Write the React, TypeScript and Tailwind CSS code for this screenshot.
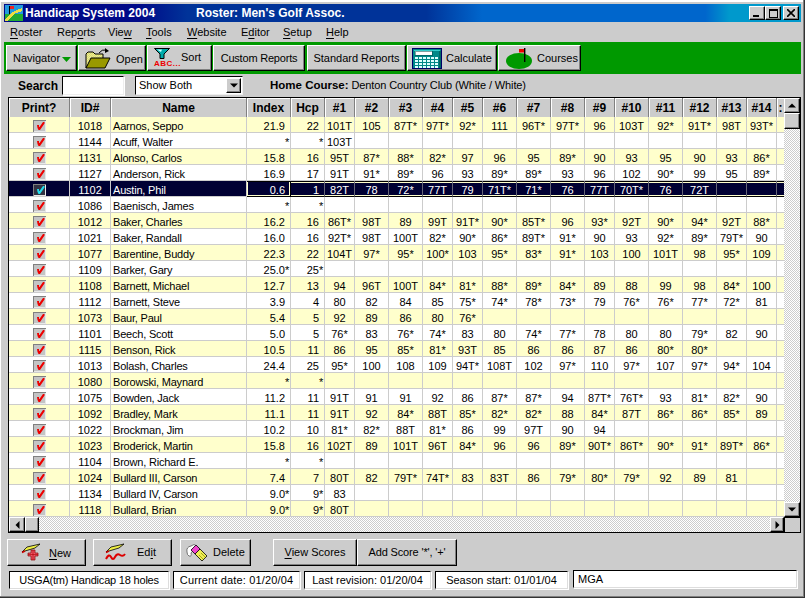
import React from "react";

const rows = [
  "1018|Aarnos, Seppo|21.9|22|101T 105 87T* 97T* 92* 111 96T* 97T* 96 103T 92* 91T* 98T 93T*",
  "1144|Acuff, Walter|*|*|103T",
  "1131|Alonso, Carlos|15.8|16|95T 87* 88* 82* 97 96 95 89* 90 93 95 90 93 86*",
  "1127|Anderson, Rick|16.9|17|91T 91* 89* 96 93 89* 89* 93 96 102 90* 99 95 89*",
  "1102|Austin, Phil|0.6|1|82T 78 72* 77T 79 71T* 71* 76 77T 70T* 76 72T",
  "1086|Baenisch, James|*|*|",
  "1012|Baker, Charles|16.2|16|86T* 98T 89 99T 91T* 90* 85T* 96 93* 92T 90* 94* 92T 88*",
  "1021|Baker, Randall|16.0|16|92T* 98T 100T 82* 90* 86* 89T* 91* 90 93 92* 89* 79T* 90",
  "1077|Barentine, Buddy|22.3|22|104T 97* 95* 100* 103 95* 83* 91* 103 100 101T 98 95* 109",
  "1109|Barker, Gary|25.0*|25*|",
  "1108|Barnett, Michael|12.7|13|94 96T 100T 84* 81* 88* 89* 84* 89 88 99 98 84* 100",
  "1112|Barnett, Steve|3.9|4|80 82 84 85 75* 74* 78* 73* 79 76* 76* 77* 72* 81",
  "1073|Baur, Paul|5.4|5|92 89 86 80 76*",
  "1101|Beech, Scott|5.0|5|76* 83 76* 74* 83 80 74* 77* 78 80 80 79* 82 90",
  "1115|Benson, Rick|10.5|11|86 95 85* 81* 93T 85 86 86 87 86 80* 80*",
  "1013|Bolash, Charles|24.4|25|95* 100 108 109 94T* 108T 102 97* 110 97* 107 97* 94* 104",
  "1080|Borowski, Maynard|*|*|",
  "1075|Bowden, Jack|11.2|11|91T 91 91 92 86 87* 87* 94 87T* 76T* 93 81* 82* 90",
  "1092|Bradley, Mark|11.1|11|91T 92 84* 88T 85* 82* 82* 88 84* 87T 86* 86* 85* 89",
  "1022|Brockman, Jim|10.2|10|81* 82* 88T 81* 86 99 97T 90 94",
  "1023|Broderick, Martin|15.8|16|102T 89 101T 96T 84* 96 96 89* 90T* 86T* 90* 91* 89T* 86*",
  "1104|Brown, Richard E.|*|*|",
  "1024|Bullard III, Carson|7.4|7|80T 82 79T* 74T* 83 83T 86 79* 80* 79* 92 89 81",
  "1134|Bullard IV, Carson|9.0*|9*|83",
  "1118|Bullard, Brian|9.0*|9*|80T",
];

const scoreWidths = [30, 34, 34, 30, 30, 34, 34, 34, 30, 34, 34, 34, 30, 30];
const scoreCols = scoreWidths.map((w, i) => ({ w, label: `#${i + 1}` }));

const raised =
  "border border-t-white border-l-white border-r-black border-b-black bg-[#cccccc] shadow-[inset_-1px_-1px_0_#808080]";
const track =
  "bg-[repeating-conic-gradient(#ffffff_0_25%,#cccccc_0_50%)] bg-[length:2px_2px]";

function Check({ selected }: { selected: boolean }) {
  return (
    <svg width="13" height="12" viewBox="0 0 13 12" shapeRendering="crispEdges" className="block">
      <rect width="13" height="12" fill={selected ? "#333344" : "#c4c4c4"} />
      <path d="M0 0H13V1H1V12H0Z" fill="#808080" />
      <path d="M12 1H13V12H1V11H12Z" fill="#e8e8e8" />
      <path
        d="M4 5H6V7L6.5 7L10 2H11.5V3.5L7 10H5.5L4.5 8Z"
        fill={selected ? "#22ddee" : "#ee0000"}
        shapeRendering="auto"
      />
    </svg>
  );
}

function Num({ value }: { value: string }) {
  const star = value.endsWith("*");
  const n = star ? value.slice(0, -1) : value;
  return (
    <span>
      {n}
      {star && <span className="-mr-[5px] inline-block w-[5px] text-left">*</span>}
    </span>
  );
}

function Row({ text, index }: { text: string; index: number }) {
  const [id, name, idx, hcp, s] = text.split("|");
  const scores = s ? s.split(" ") : [];
  const sel = id === "1102";
  const base = "h-[16px] shrink-0 border-r border-b border-[#cccccc] leading-[18px] whitespace-nowrap overflow-hidden";
  const rowBg = sel ? "bg-[#000033] text-white" : index % 2 === 0 ? "bg-[#ffffcc]" : "bg-white";
  const frame = sel
    ? "border-r-[#666677] border-b-black shadow-[inset_0_1px_0_#000000,inset_0_2px_0_#ffffcc,inset_0_-1px_0_#ffffcc]"
    : "";
  return (
    <div className={`flex h-[16px] ${rowBg}`}>
      <div className={`${base} flex w-[61px] items-start justify-center pt-[3px]`}>
        <Check selected={sel} />
      </div>
      <div className={`${base} w-[41px] text-center`}>{id}</div>
      <div className={`${base} w-[136px] pl-[2px] tracking-[-0.2px]`}>{name}</div>
      <div
        className={`${base} w-[44px] pr-[5px] text-right ${
          sel ? "border-black shadow-[inset_0_1px_0_#000000,inset_1px_1px_0_#ffffcc,inset_-1px_-1px_0_#ffffcc]" : ""
        }`}
      >
        <Num value={idx} />
      </div>
      <div className={`${base} w-[34px] pr-[5px] text-right ${frame}`}>
        <Num value={hcp} />
      </div>
      {scoreCols.map((c, i) => (
        <div key={c.label} className={`${base} text-center ${frame} ${c.w === 30 ? "w-[30px]" : "w-[34px]"}`}>
          {scores[i] ?? ""}
        </div>
      ))}
      <div className={`${base} w-[7px] border-r-0 ${frame}`} />
    </div>
  );
}

function HeaderCell({ label, className }: { label: string; className: string }) {
  return (
    <div
      className={`h-[19px] shrink-0 overflow-hidden whitespace-nowrap border-r border-[#808080] bg-[#cccccc] text-center text-[12px] font-bold leading-[20px] text-black shadow-[inset_1px_1px_0_#ffffff] ${className}`}
    >
      {label}
    </div>
  );
}

function Arrow({ dir }: { dir: "up" | "down" | "left" | "right" }) {
  const d = {
    up: "M4 0.5L0 4.5H8Z",
    down: "M0 0.5H8L4 4.5Z",
    left: "M4.5 0V8L0.5 4Z",
    right: "M0.5 0V8L4.5 4Z",
  }[dir];
  return (
    <svg width={dir === "up" || dir === "down" ? 8 : 5} height={dir === "up" || dir === "down" ? 5 : 8}>
      <path d={d} fill="#000" />
    </svg>
  );
}

function Folder() {
  return (
    <svg width="26" height="21" viewBox="0 0 26 21" className="block">
      <defs>
        <pattern id="dith" width="2" height="2" patternUnits="userSpaceOnUse">
          <rect width="2" height="2" fill="#ffff66" />
          <rect width="1" height="1" fill="#c8c8a0" />
          <rect x="1" y="1" width="1" height="1" fill="#c8c8a0" />
        </pattern>
      </defs>
      <path d="M1 6L3 4H8L10 6H18V11H7L1 20Z" fill="url(#dith)" stroke="#000" />
      <path d="M1 20L6 10H25L20 20Z" fill="#999900" stroke="#000" />
      <path d="M14 5Q17 1 21 2" fill="none" stroke="#000" />
      <path d="M20 0L24 3L20 5Z" fill="#000" />
    </svg>
  );
}

function Calculator() {
  const keys: React.ReactNode[] = [];
  for (let r = 0; r < 4; r++)
    for (let c = 0; c < 6; c++)
      keys.push(<rect key={`${r}-${c}`} x={3 + c * 4} y={9 + r * 3} width="3" height="2" fill="#ddffff" />);
  return (
    <svg width="30" height="21" viewBox="0 0 30 21" shapeRendering="crispEdges" className="block">
      <rect x="0.5" y="0.5" width="29" height="20" fill="#008888" stroke="#000066" />
      <rect x="2" y="2" width="26" height="1" fill="#33cccc" />
      <rect x="3" y="3" width="17" height="4" fill="#ffffff" stroke="#004444" strokeWidth="0.5" />
      {keys}
      <rect x="27" y="3" width="2" height="17" fill="#006666" />
    </svg>
  );
}

function Green() {
  return (
    <svg width="27" height="21" viewBox="0 0 27 21" className="block">
      <ellipse cx="13" cy="13" rx="13" ry="8" fill="#009900" />
      <rect x="18" y="0" width="1.4" height="14" fill="#000" />
      <rect x="13" y="1" width="5" height="3.5" fill="#ee0000" />
    </svg>
  );
}

function Pencil({ cross }: { cross: boolean }) {
  return (
    <svg width="28" height="20" viewBox="0 0 28 20" className="block">
      <path d="M1 9L6 4L19 1L14 5L4 8Z" fill="#eeee44" stroke="#000" strokeWidth="0.8" />
      <path d="M1 9.5L4 8" stroke="#cc0000" strokeWidth="1.4" />
      {cross ? (
        <>
          <path d="M10 7H14V10H17V13H14V17H10V13H7V10H10Z" fill="#ee5566" stroke="#880000" strokeWidth="0.7" />
          <path d="M12 7V17M7 11.5H17" stroke="#aa0000" strokeWidth="0.6" />
        </>
      ) : (
        <path d="M1 16Q4 10 6 14T10 14T15 12T20 11" fill="none" stroke="#dd0000" strokeWidth="2" />
      )}
    </svg>
  );
}

function Eraser() {
  return (
    <svg width="23" height="20" viewBox="0 0 23 20" className="block">
      <path d="M1 9Q0 4 5 3Q8 0 11 3L5 10Q6 14 3 13Q1 12 1 9Z" fill="#fff" stroke="#555" strokeWidth="0.8" />
      <path d="M14 6L21 13L16 18L9 11Z" fill="#eeee55" stroke="#000" strokeWidth="0.8" />
      <path d="M10 2L14 6L9 11L5 7Z" fill="#ee44cc" stroke="#000" strokeWidth="0.8" />
      <path d="M15 10L19 14M13 12L17 16" stroke="#888800" strokeWidth="0.7" />
    </svg>
  );
}

function U({ children }: { children: string }) {
  return <span className="underline underline-offset-[2px]">{children}</span>;
}

function ToolBtn({ className, children }: { className: string; children: React.ReactNode }) {
  return <div className={`flex h-[26px] shrink-0 items-center text-[11px] ${raised} ${className}`}>{children}</div>;
}

function BottomBtn({ className, children }: { className: string; children: React.ReactNode }) {
  return <div className={`flex h-[27px] shrink-0 items-center text-[11px] ${raised} ${className}`}>{children}</div>;
}

function Status({ className, children }: { className: string; children: React.ReactNode }) {
  return (
    <div
      className={`flex h-[18px] shrink-0 items-center justify-center whitespace-nowrap border border-t-black border-l-black border-r-[#dddddd] border-b-[#dddddd] bg-white shadow-[1px_1px_0_#ffffff] ${className}`}
    >
      {children}
    </div>
  );
}

const menus: [string, string, string, string][] = [
  ["", "R", "oster", "w-[47px]"],
  ["Rep", "o", "rts", "w-[51px]"],
  ["Vie", "w", "", "w-[38px]"],
  ["", "T", "ools", "w-[41px]"],
  ["", "W", "ebsite", "w-[54px]"],
  ["E", "d", "itor", "w-[42px]"],
  ["", "S", "etup", "w-[43px]"],
  ["", "H", "elp", "w-[30px]"],
];

export default function App() {
  return (
    <div className="h-[598px] w-[805px] overflow-hidden bg-[#cccccc] pl-[4px] pt-[4px] font-['Liberation_Sans',Arial,sans-serif] text-[11px] text-black shadow-[inset_-1px_-1px_0_#333333,inset_-2px_-2px_0_#808080,inset_1px_2px_0_#ffffff]">
      {/* Title bar */}
      <div className="flex h-[18px] w-[797px] items-center bg-[linear-gradient(90deg,#000a88_0%,#000a88_17%,#003399_23%,#003399_53%,#0066cc_60%,#0066cc_88%,#0099cc_91%,#0099cc_100%)] text-[12px] font-bold text-white">
        <svg width="18" height="16" viewBox="0 0 18 16" shapeRendering="crispEdges" className="ml-[1px] shrink-0">
          <rect width="18" height="16" fill="#2299dd" />
          <rect y="9" width="18" height="7" fill="#22aa33" />
          <path d="M0 14L6 8L12 5L17 3V6L11 8L5 13L2 16H0Z" fill="#eedd44" />
          <rect x="4" y="1" width="1" height="8" fill="#000" />
          <rect x="5" y="1" width="4" height="3" fill="#ee2222" />
        </svg>
        <span className="ml-[2px]">Handicap System 2004</span>
        <span className="ml-[41px]">Roster: Men&apos;s Golf Assoc.</span>
        <div className="ml-auto mr-[2px] flex">
          <div className={`flex h-[14px] w-[16px] items-end ${raised}`}>
            <div className="mb-[2px] ml-[3px] h-[2px] w-[6px] bg-black" />
          </div>
          <div className={`flex h-[14px] w-[16px] items-center justify-center ${raised}`}>
            <div className="h-[9px] w-[9px] border border-t-2 border-black" />
          </div>
          <div className={`ml-[2px] flex h-[14px] w-[16px] items-center justify-center ${raised}`}>
            <svg width="8" height="8" viewBox="0 0 8 8">
              <path d="M0 0L8 8M8 0L0 8" stroke="#000" strokeWidth="1.6" />
            </svg>
          </div>
        </div>
      </div>

      {/* Menu */}
      <div className="flex h-[20px] items-center pl-[6px] pt-[1px]">
        {menus.map(([a, u, b, w]) => (
          <div key={a + u + b} className={`${w} whitespace-nowrap`}>
            {a}
            <U>{u}</U>
            {b}
          </div>
        ))}
      </div>

      {/* Toolbar */}
      <div className="flex h-[32px] w-[797px] items-center gap-[1px] bg-[#009900] pl-[2px]">
        <ToolBtn className="w-[71px] pl-[6px]">
          Navigator
          <svg width="9" height="5" className="ml-[2px] mt-[2px]">
            <path d="M0 0H9L4.5 5Z" fill="#009900" />
          </svg>
        </ToolBtn>
        <ToolBtn className="w-[68px] pl-[6px]">
          <Folder />
          <span className="ml-[5px] mt-[2px]">Open</span>
        </ToolBtn>
        <ToolBtn className="w-[65px] pl-[6px]">
          <div className="flex w-[27px] flex-col items-start">
            <svg width="16" height="11" viewBox="0 0 16 11" className="block">
              <path d="M0.5 0.5H15.5L10 6V10.5H6V6Z" fill="#00aaaa" stroke="#000" />
              <path d="M3 1.5H8L7 4Z" fill="#ccffff" />
            </svg>
            <span className="text-[8px] font-bold leading-[9px] tracking-[0.5px] text-[#ee0000]">ABC...</span>
          </div>
          <span className="mb-[2px]">Sort</span>
        </ToolBtn>
        <ToolBtn className="w-[92px] justify-center tracking-[-0.2px]">Custom Reports</ToolBtn>
        <ToolBtn className="ml-[1px] w-[99px] justify-center">Standard Reports</ToolBtn>
        <ToolBtn className="w-[90px] pl-[4px]">
          <Calculator />
          <span className="ml-[4px]">Calculate</span>
        </ToolBtn>
        <ToolBtn className="w-[83px] pl-[7px]">
          <Green />
          <span className="ml-[4px]">Courses</span>
        </ToolBtn>
      </div>

      {/* Search row */}
      <div className="mt-[2px] flex h-[19px] items-center">
        <span className="ml-[14px] w-[44px] text-[12px] font-bold">Search</span>
        <div className="h-[19px] w-[62px] border border-t-black border-l-black border-r-[#eeeeee] border-b-[#eeeeee] bg-white shadow-[1px_1px_0_#ffffff]" />
        <div className="ml-[11px] flex h-[19px] w-[108px] items-center justify-between border border-t-black border-l-black border-r-[#eeeeee] border-b-[#eeeeee] bg-white pl-[3px] pr-[1px]">
          <span>Show Both</span>
          <div className={`flex h-[15px] w-[15px] items-center justify-center ${raised}`}>
            <Arrow dir="down" />
          </div>
        </div>
        <span className="ml-[27px] whitespace-nowrap tracking-[-0.12px]">
          <span className="text-[11.5px] font-bold tracking-normal">Home Course:</span> Denton Country Club (White / White)
        </span>
      </div>

      {/* Grid */}
      <div className="ml-[4px] mt-[2px] flex h-[436px] w-[793px] flex-col border border-black">
        <div className="flex h-[419px] bg-white">
          <div className="w-[775px] shrink-0">
            <div className="flex">
              <HeaderCell label="Print?" className="w-[61px]" />
              <HeaderCell label="ID#" className="w-[41px]" />
              <HeaderCell label="Name" className="w-[136px]" />
              <HeaderCell label="Index" className="w-[44px]" />
              <HeaderCell label="Hcp" className="w-[34px]" />
              {scoreCols.map((c) => (
                <HeaderCell key={c.label} label={c.label} className={c.w === 30 ? "w-[30px]" : "w-[34px]"} />
              ))}
              <HeaderCell label=":" className="w-[7px] border-r-0" />
            </div>
            {rows.map((r, i) => (
              <Row key={r} text={r} index={i} />
            ))}
          </div>
          <div className={`flex w-[16px] flex-col ${track}`}>
            <div className={`flex h-[15px] items-center justify-center ${raised}`}>
              <Arrow dir="up" />
            </div>
            <div className={`h-[16px] ${raised}`} />
            <div className="flex-1" />
            <div className={`flex h-[15px] items-center justify-center ${raised}`}>
              <Arrow dir="down" />
            </div>
          </div>
        </div>
        <div className={`flex h-[15px] ${track}`}>
          <div className={`flex w-[16px] items-center justify-center ${raised}`}>
            <Arrow dir="left" />
          </div>
          <div className={`w-[14px] ${raised}`} />
          <div className="flex-1" />
          <div className={`flex w-[14px] items-center justify-center ${raised}`}>
            <Arrow dir="right" />
          </div>
          <div className="w-[16px] border-l border-t border-black bg-[#cccccc]" />
        </div>
      </div>

      {/* Buttons */}
      <div className="ml-[3px] mt-[6px] flex h-[27px]">
        <BottomBtn className="w-[79px] pl-[13px]">
          <Pencil cross />
          <span className="ml-[0px] mt-[2px]">
            <U>N</U>ew
          </span>
        </BottomBtn>
        <BottomBtn className="ml-[7px] w-[79px] pl-[11px]">
          <Pencil cross={false} />
          <span className="ml-[4px]">
            Ed<U>i</U>t
          </span>
        </BottomBtn>
        <BottomBtn className="ml-[8px] w-[71px] pl-[5px]">
          <Eraser />
          <span className="ml-[4px]">Delete</span>
        </BottomBtn>
        <BottomBtn className="ml-[22px] w-[84px] justify-center">
          <span>
            <U>V</U>iew Scores
          </span>
        </BottomBtn>
        <BottomBtn className="w-[100px] justify-center tracking-[-0.15px]">Add Score &apos;*&apos;, &apos;+&apos;</BottomBtn>
      </div>

      {/* Status */}
      <div className="mt-[5px] flex h-[19px] items-start pl-[5px]">
        <Status className="w-[160px] tracking-[-0.2px]">USGA(tm) Handicap 18 holes</Status>
        <Status className="ml-[4px] w-[127px] tracking-[0.15px]">Current date: 01/20/04</Status>
        <Status className="ml-[4px] w-[127px]">Last revision: 01/20/04</Status>
        <Status className="ml-[4px] w-[133px]">Season start: 01/01/04</Status>
        <Status className="-mt-[1px] ml-[5px] w-[224px] !justify-start pl-[4px]">MGA</Status>
      </div>
    </div>
  );
}
